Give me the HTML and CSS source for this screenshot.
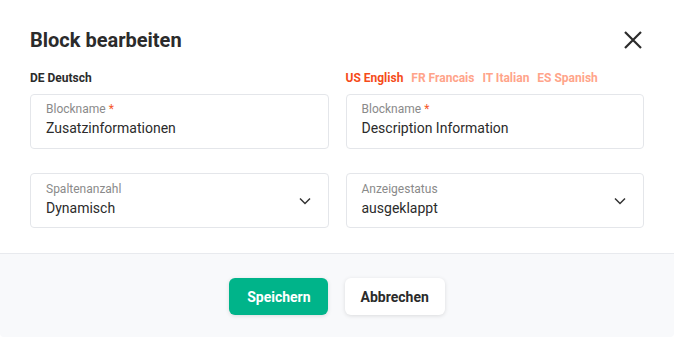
FILE: index.html
```html
<!DOCTYPE html>
<html lang="de">
<head>
  <meta charset="UTF-8">
  <title>Block bearbeiten</title>
  <link rel="stylesheet" href="styles.css">
</head>
<body>
  <div class="modal">
    <div class="modal-head">
      <h1>Block bearbeiten</h1>
      <button class="close-btn" aria-label="Schliessen">
        <svg width="18" height="18" viewBox="0 0 18 18"><path d="M1 1L17 17M17 1L1 17" stroke="#2b2b2b" stroke-width="2.2" fill="none"/></svg>
      </button>
    </div>
    <div class="modal-body">
      <div class="col">
        <div class="lang-row">
          <span class="lang base">DE Deutsch</span>
        </div>
        <div class="field">
          <label>Blockname <span class="req">*</span></label>
          <div class="value">Zusatzinformationen</div>
        </div>
        <div class="field select">
          <div>
            <label>Spaltenanzahl</label>
            <div class="value">Dynamisch</div>
          </div>
          <svg class="chevron" width="12" height="8" viewBox="0 0 12 8"><path d="M1 1.5L6 6.5L11 1.5" stroke="#333" stroke-width="1.5" fill="none"/></svg>
        </div>
      </div>
      <div class="col">
        <div class="lang-row">
          <span class="lang active">US English</span>
          <span class="lang">FR Francais</span>
          <span class="lang">IT Italian</span>
          <span class="lang">ES Spanish</span>
        </div>
        <div class="field">
          <label>Blockname <span class="req">*</span></label>
          <div class="value">Description Information</div>
        </div>
        <div class="field select">
          <div>
            <label>Anzeigestatus</label>
            <div class="value">ausgeklappt</div>
          </div>
          <svg class="chevron" width="12" height="8" viewBox="0 0 12 8"><path d="M1 1.5L6 6.5L11 1.5" stroke="#333" stroke-width="1.5" fill="none"/></svg>
        </div>
      </div>
    </div>
    <div class="modal-foot">
      <button class="btn primary">Speichern</button>
      <button class="btn">Abbrechen</button>
    </div>
  </div>
</body>
</html>
```

FILE: styles.css
```css
html, body {
  margin: 0;
  height: 100%;
}
body {
  font-family: Roboto, "Liberation Sans", Arial, sans-serif;
  color: #2b2b2b;
  background: #fff;
}
.modal {
  height: 100%;
  display: flex;
  flex-direction: column;
  background: #fff;
  border-radius: 4px;
  overflow: hidden;
}
.modal-head {
  display: flex;
  justify-content: space-between;
  align-items: center;
  padding: 27px 30px 0 30px;
  height: 26px;
}
.modal-head h1 {
  margin: 0;
  font-size: 20px;
  font-weight: 700;
  color: #2b2b2b;
}
.close-btn {
  border: 0;
  background: none;
  padding: 0;
  margin-right: 2px;
  width: 18px;
  height: 18px;
  cursor: pointer;
}
.close-btn svg {
  display: block;
}
.modal-body {
  display: flex;
  gap: 17px;
  padding: 16px 30px 25px 30px;
}
.col {
  flex: 1;
  display: flex;
  flex-direction: column;
}
.lang-row {
  display: flex;
  gap: 8px;
  height: 25px;
  align-items: flex-start;
  padding-top: 2px;
  box-sizing: border-box;
}
.lang {
  font-size: 12px;
  font-weight: 700;
  color: #ffa48a;
}
.lang.base {
  color: #2b2b2b;
}
.lang.active {
  color: #f54b1a;
}
.field {
  height: 55px;
  box-sizing: border-box;
  border: 1px solid #e4e6ea;
  border-radius: 4px;
  padding: 7px 16px 0 15px;
  margin-bottom: 24px;
}
.field:last-child {
  margin-bottom: 0;
}
.field label {
  display: block;
  font-size: 12px;
  color: #8a8a8a;
  line-height: 15px;
}
.req {
  color: #f5582a;
}
.field .value {
  font-size: 14px;
  line-height: 22px;
  color: #2b2b2b;
}
.field.select {
  display: flex;
  justify-content: space-between;
  align-items: center;
  padding-top: 0;
  padding-right: 17px;
}
.modal-foot {
  flex: 1;
  background: #f8f9fb;
  border-top: 1px solid #e8eaee;
  display: flex;
  justify-content: center;
  align-items: flex-start;
  gap: 17px;
  padding-top: 24px;
}
.btn {
  height: 37px;
  padding: 0 16px;
  border: 0;
  border-radius: 6px;
  font-family: inherit;
  font-size: 14px;
  font-weight: 700;
  color: #2b2b2b;
  background: #fff;
  box-shadow: 0 1px 4px rgba(0, 0, 0, 0.12);
  cursor: pointer;
}
.btn.primary {
  background: #00b48a;
  color: #fff;
  padding: 0 17px 0 18px;
}
```
